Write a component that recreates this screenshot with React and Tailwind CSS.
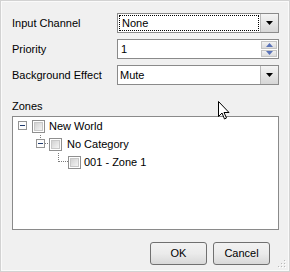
import React from "react";

function DropButton() {
  return (
    <div className="w-[18px] h-full flex items-center justify-center bg-gradient-to-b from-[#f4f4f4] to-[#d6d6d6] border-l border-[#b8b8b8]">
      <svg width="7" height="4" viewBox="0 0 7 4">
        <path d="M0 0h7L3.5 4z" fill="#000" />
      </svg>
    </div>
  );
}

function Checkbox() {
  return (
    <div className="w-[13px] h-[13px] border border-[#8f8f8f] bg-white p-[1px] shrink-0">
      <div className="w-full h-full bg-gradient-to-br from-[#d2d2d2] to-[#f4f4f4] border border-[#c8c8c8]" />
    </div>
  );
}

function Minus() {
  return (
    <>
      <rect x="0.5" y="0.5" width="8" height="8" fill="#fcfcfc" stroke="#949494" />
      <path d="M2 4.5h5" stroke="#1e3a6e" />
    </>
  );
}

export default function App() {
  return (
    <div className="relative w-[290px] h-[272px] bg-[#f0f0f0] border border-[#d2d2d2] font-['Tahoma','Liberation_Sans',sans-serif] text-[11px] text-black leading-none">
      <div className="h-full border border-[#fafafa] pl-[10px] pr-[9px] pt-[11px] flex flex-col">
        <div className="grid grid-cols-[105px_162px] gap-y-[6px]">
          <div className="h-[20px] flex items-center">Input Channel</div>
          <div className="h-[20px] flex border border-[#8a8a8a] bg-white">
            <div className="flex-1 m-[1px] border border-dotted border-black flex items-center pl-[2px]">None</div>
            <DropButton />
          </div>
          <div className="h-[20px] flex items-center">Priority</div>
          <div className="h-[20px] flex border border-[#8a8a8a] bg-white">
            <div className="flex-1 flex items-center pl-[3px]">1</div>
            <div className="w-[16px] my-[1px] mr-[1px] flex flex-col gap-[1px]">
              <div className="flex-1 flex items-center justify-center bg-gradient-to-b from-[#f2f2f2] to-[#dcdcdc] border border-[#c4c4c4]">
                <svg width="7" height="4" viewBox="0 0 7 4"><path d="M0 4h7L3.5 0z" fill="#5a73b8" /></svg>
              </div>
              <div className="flex-1 flex items-center justify-center bg-gradient-to-b from-[#f2f2f2] to-[#dcdcdc] border border-[#c4c4c4]">
                <svg width="7" height="4" viewBox="0 0 7 4"><path d="M0 0h7L3.5 4z" fill="#5a73b8" /></svg>
              </div>
            </div>
          </div>
          <div className="h-[20px] flex items-center">Background Effect</div>
          <div className="h-[20px] flex border border-[#8a8a8a] bg-white">
            <div className="flex-1 flex items-center pl-[2px]">Mute</div>
            <DropButton />
          </div>
        </div>

        <div className="mt-[15px] h-[13px] flex items-center">Zones</div>
        <div className="mt-[3px] h-[114px] border border-[#8a8a8a] bg-white pt-[0px]">
          <div className="h-[18px] flex items-center">
            <svg width="19" height="18" viewBox="0 0 19 18" className="shrink-0">
              <g transform="translate(5 4)"><Minus /></g>
            </svg>
            <Checkbox />
            <span className="ml-[4px]">New World</span>
          </div>
          <div className="h-[18px] flex items-center">
            <svg width="36" height="18" viewBox="0 0 36 18" className="shrink-0">
              <path d="M27.5 0v4" stroke="#7a7a7a" strokeDasharray="1 1" />
              <path d="M32 8.5h4" stroke="#7a7a7a" strokeDasharray="1 1" />
              <g transform="translate(23 4)"><Minus /></g>
            </svg>
            <Checkbox />
            <span className="ml-[5px]">No Category</span>
          </div>
          <div className="h-[18px] flex items-center">
            <svg width="55" height="18" viewBox="0 0 55 18" className="shrink-0">
              <path d="M45.5 0v9" stroke="#7a7a7a" strokeDasharray="1 1" />
              <path d="M46 8.5h9" stroke="#7a7a7a" strokeDasharray="1 1" />
            </svg>
            <Checkbox />
            <span className="ml-[3px]">001 - Zone 1</span>
          </div>
        </div>

        <div className="mt-[12px] flex justify-end gap-[6px] pr-[9px]">
          <button className="w-[57px] h-[23px] rounded-[3px] border border-[#707070] bg-gradient-to-b from-[#f2f2f2] via-[#ebebeb] to-[#d8d8d8] flex items-center justify-center">OK</button>
          <button className="w-[57px] h-[23px] rounded-[3px] border border-[#707070] bg-gradient-to-b from-[#f2f2f2] via-[#ebebeb] to-[#d8d8d8] flex items-center justify-center">Cancel</button>
        </div>
      </div>

      <svg className="absolute right-[2px] bottom-[2px]" width="9" height="9" viewBox="0 0 9 9">
        {[[7,1],[7,4],[4,4],[7,7],[4,7],[1,7]].map(([x,y],i)=>(
          <g key={i}>
            <rect x={x} y={y} width="1" height="1" fill="#fff" />
            <rect x={x-1} y={y-1} width="1" height="1" fill="#b8b8b8" />
          </g>
        ))}
      </svg>

      <svg className="absolute left-[217px] top-[100px]" width="13" height="20" viewBox="0 0 13 20">
        <path d="M0.5 0.5v15l3.5-3.5 2.5 6 2-1-2.5-5.5h5z" fill="#fff" stroke="#000" strokeLinejoin="miter" />
      </svg>
    </div>
  );
}
